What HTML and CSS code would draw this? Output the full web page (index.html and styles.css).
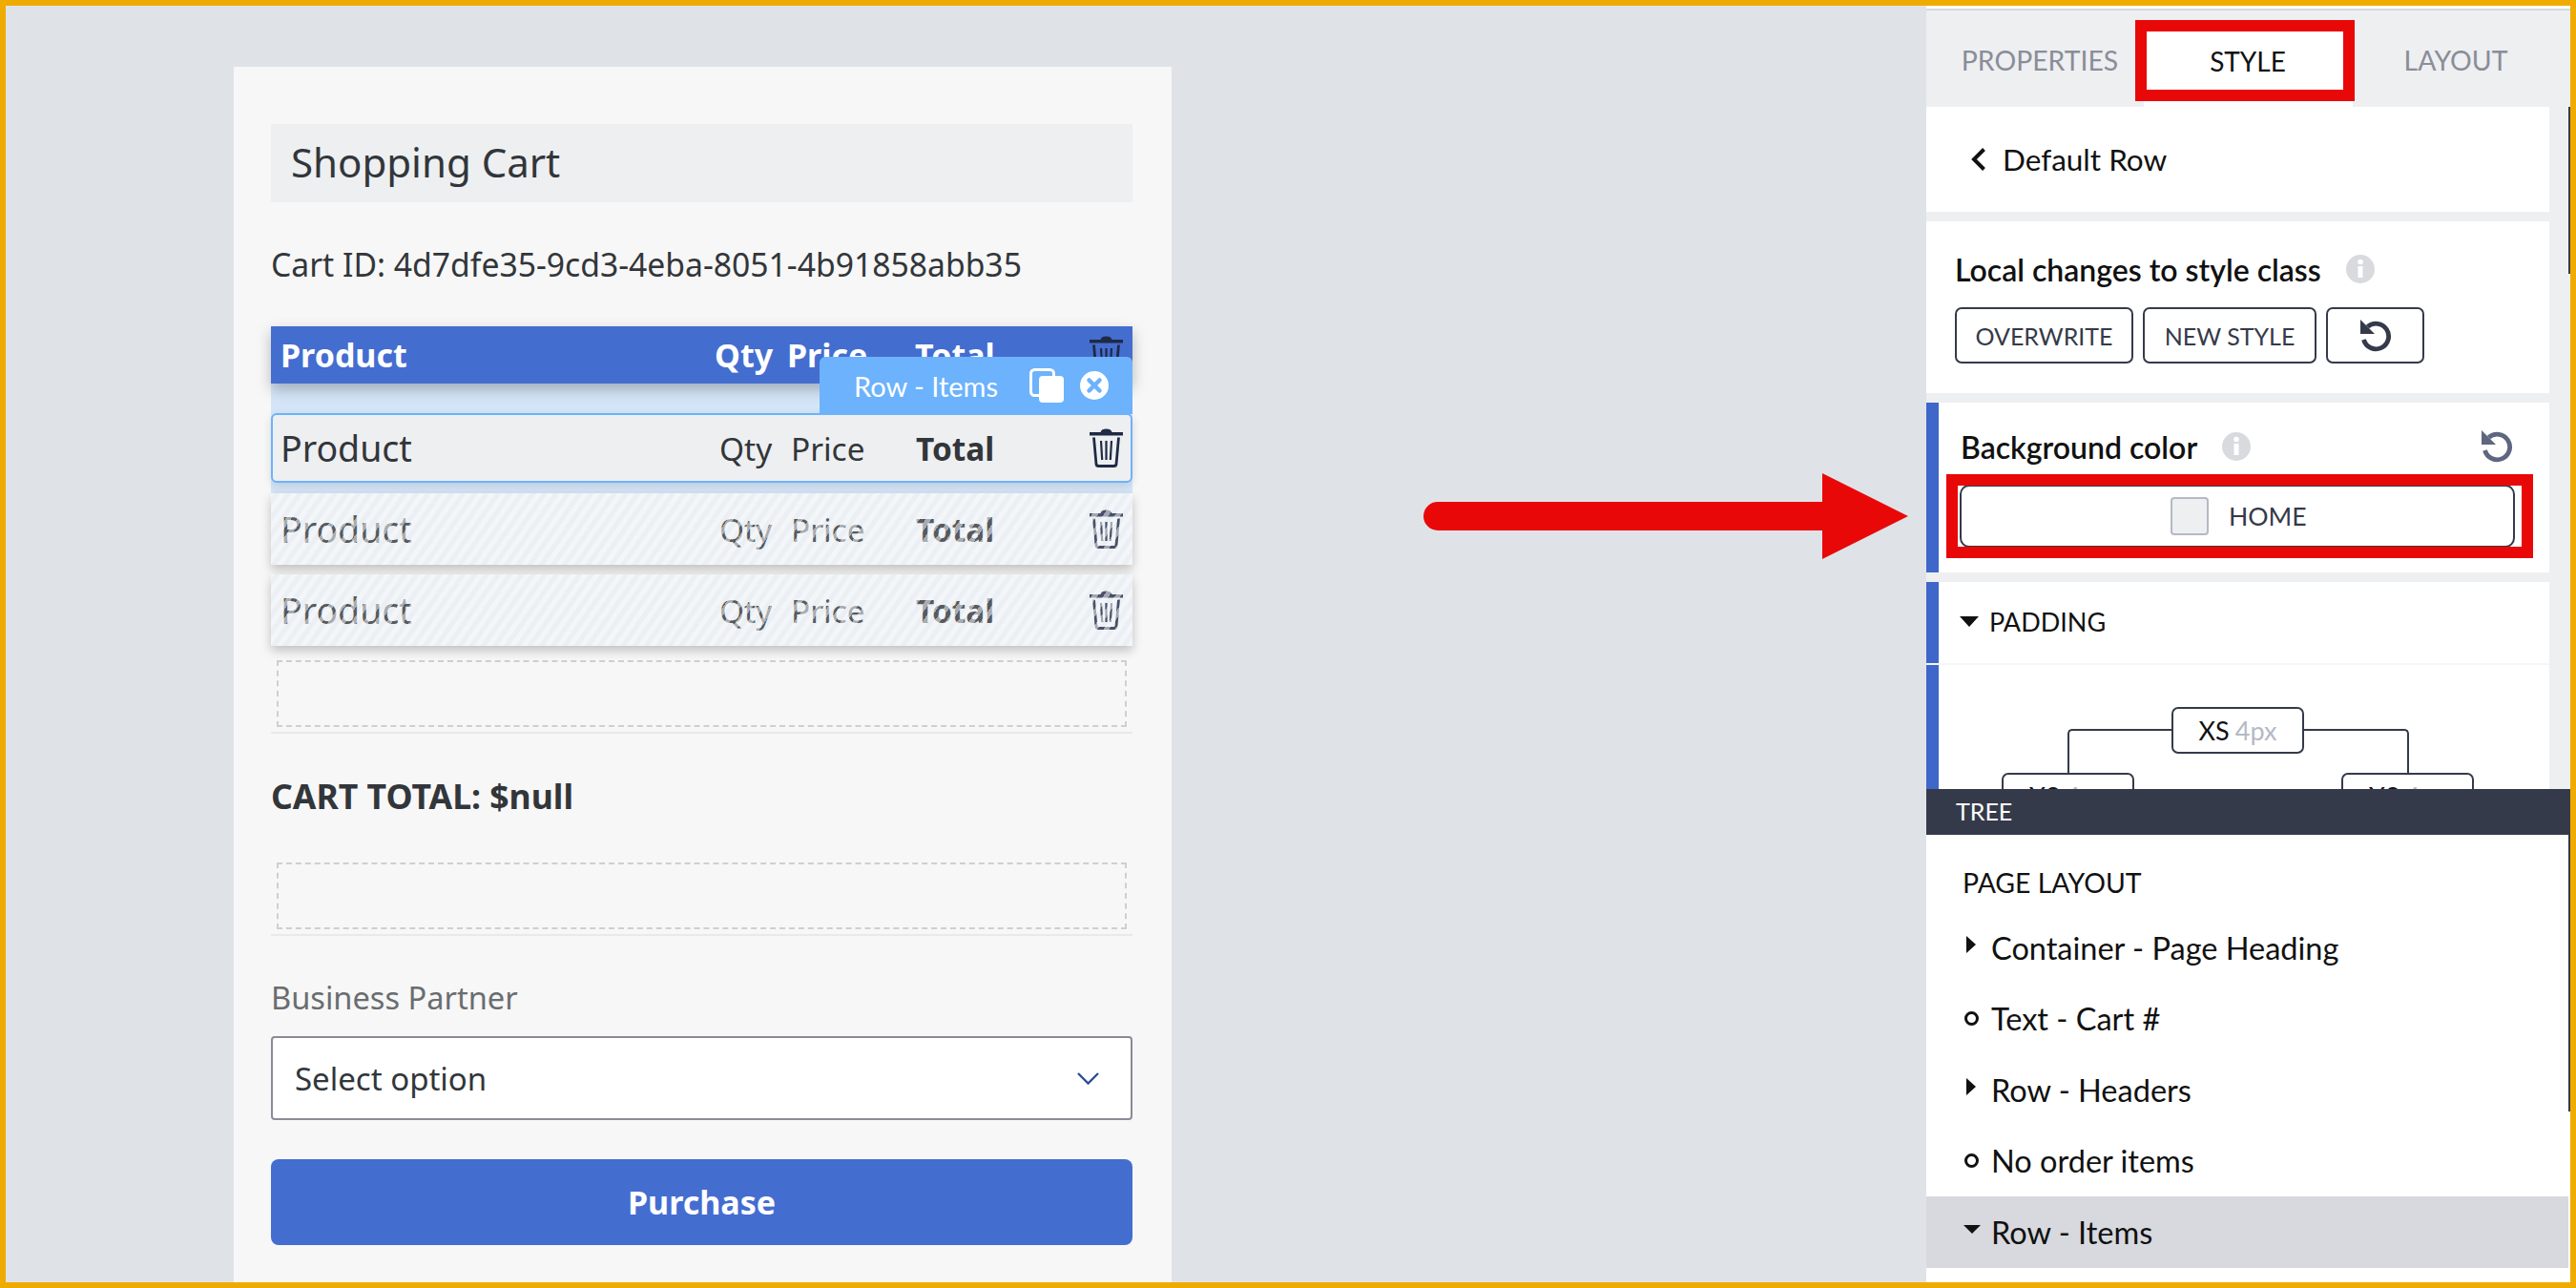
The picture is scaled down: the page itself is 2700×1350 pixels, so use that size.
FILE: index.html
```html
<!DOCTYPE html>
<html lang="en">
<head>
<meta charset="utf-8">
<title>Shopping Cart designer</title>
<link rel="stylesheet" href="styles.css">
</head>
<body>
<svg class="defs" width="0" height="0" aria-hidden="true">
  <symbol id="trash" viewBox="0 0 35 41">
    <path d="M11.5 4C12 1.5 14.5.5 17.5.5S23 1.500 23.500 4z" fill="currentColor"/>
    <rect x="0" y="4" width="35" height="3.500" fill="currentColor"/>
    <path d="M4.500 9.500 7 37.500Q7.300 39.500 9.500 39.500H25.500Q27.700 39.500 28 37.500L30.500 9.500" fill="none" stroke="currentColor" stroke-width="2.800"/>
    <path d="M12 13 13.200 33M17.500 13V33M23 13 21.800 33" fill="none" stroke="currentColor" stroke-width="2.200"/>
  </symbol>
  <symbol id="reset" viewBox="0 0 34 34">
    <path d="M8.500 7.500A13.300 13.300 0 1 1 4.500 21" fill="none" stroke="currentColor" stroke-width="4.800"/>
    <path d="M1 0 1 15 16 15z" fill="currentColor"/>
  </symbol>
  <symbol id="info" viewBox="0 0 30 30">
    <circle cx="15" cy="15" r="15" fill="#d8dade"/>
    <rect x="12.500" y="12" width="5" height="12" fill="#fff"/>
    <circle cx="15" cy="7.500" r="2.800" fill="#fff"/>
  </symbol>
</svg>
<div class="page">
  <main class="canvas">
    <section class="card">
      <h1 class="title">Shopping Cart</h1>
      <p class="cart-id">Cart ID: 4d7dfe35-9cd3-4eba-8051-4b91858abb35</p>

      <div class="row row-head">
        <span>Product</span><span>Qty</span><span>Price</span><span>Total</span>
        <svg class="trash"><use href="#trash"/></svg>
      </div>

      <div class="items">
        <div class="toolbar">
          <span class="toolbar-label">Row - Items</span>
          <svg class="copy-icon" viewBox="0 0 36 36">
            <rect x="1.500" y="1.500" width="24" height="27" rx="4" fill="none" stroke="#fff" stroke-width="3"/>
            <rect x="10" y="8" width="26" height="28" rx="4" fill="#fff"/>
          </svg>
          <svg class="close-icon" viewBox="0 0 30 30">
            <circle cx="15" cy="15" r="15" fill="#fff"/>
            <path d="M9.500 9.500 20.500 20.500M20.500 9.500 9.500 20.500" stroke="#6cb2fc" stroke-width="4.500" stroke-linecap="round"/>
          </svg>
        </div>
        <div class="row row-item row-selected">
          <span class="product">Product</span><span>Qty</span><span>Price</span><strong>Total</strong>
          <svg class="trash"><use href="#trash"/></svg>
        </div>
      </div>
      <div class="row row-item row-ghost">
        <span class="product">Product</span><span>Qty</span><span>Price</span><strong>Total</strong>
        <svg class="trash"><use href="#trash"/></svg>
      </div>
      <div class="row row-item row-ghost">
        <span class="product">Product</span><span>Qty</span><span>Price</span><strong>Total</strong>
        <svg class="trash"><use href="#trash"/></svg>
      </div>

      <div class="dropzone dropzone-first"><div class="dashed"></div></div>
      <p class="cart-total">CART TOTAL: $null</p>
      <div class="dropzone dropzone-second"><div class="dashed"></div></div>

      <p class="field-label">Business Partner</p>
      <div class="select">
        <span>Select option</span>
        <svg class="select-chevron" viewBox="0 0 23 13"><path d="M1 1 11.500 11.500 22 1" fill="none" stroke="#2a4d9c" stroke-width="2.400"/></svg>
      </div>
      <button class="purchase" type="button">Purchase</button>
    </section>
  </main>

  <svg class="arrow" viewBox="0 0 508 90">
    <path d="M15 30H418V0L508 45 418 90V60H15A15 15 0 0 1 15 30z" fill="#e90808"/>
  </svg>

  <aside class="panel">
    <nav class="tabs">
      <div class="tab tab-left">PROPERTIES</div>
      <div class="tab-active-wrap"><div class="tab-active">STYLE</div></div>
      <div class="tab tab-right">LAYOUT</div>
    </nav>
    <div class="sections">
      <div class="scrollbar scrollbar-top"></div>
      <div class="sec sec-back">
        <svg class="back-chevron" viewBox="0 0 15 24"><path d="M13.500 1.500 3 12 13.500 22.500" fill="none" stroke="#111" stroke-width="4"/></svg>
        <span>Default Row</span>
      </div>
      <div class="sec sec-local">
        <div class="sec-title-row">
          <span class="sec-title">Local changes to style class</span>
          <svg class="info"><use href="#info"/></svg>
        </div>
        <div class="btn-row">
          <button class="btn btn-overwrite" type="button">OVERWRITE</button>
          <button class="btn btn-new" type="button">NEW STYLE</button>
          <button class="btn btn-reset" type="button"><svg class="reset-dark"><use href="#reset"/></svg></button>
        </div>
      </div>
      <div class="sec sec-bg">
        <div class="sec-title-row">
          <span class="sec-title">Background color</span>
          <svg class="info"><use href="#info"/></svg>
          <svg class="reset-muted"><use href="#reset"/></svg>
        </div>
        <div class="highlight">
          <div class="color-btn"><span class="swatch"></span><span>HOME</span></div>
        </div>
      </div>
      <div class="sec sec-padding-head">
        <span class="tri-down-lg"></span><span>PADDING</span>
      </div>
      <div class="sec sec-diagram">
        <div class="diagram">
          <div class="wire wire-left"></div>
          <div class="wire wire-right"></div>
          <div class="pad-box pad-top">XS <em>4px</em></div>
          <div class="pad-box pad-left">XS <em>4px</em></div>
          <div class="pad-box pad-right">XS <em>4px</em></div>
        </div>
      </div>
    </div>
    <div class="tree">
      <div class="tree-bar">TREE</div>
      <div class="tree-body">
        <div class="scrollbar scrollbar-tree"></div>
        <div class="tree-heading">PAGE LAYOUT</div>
        <div class="tree-row"><span class="mark"><i class="tri-right"></i></span>Container - Page Heading</div>
        <div class="tree-row"><span class="mark"><i class="dot"></i></span>Text - Cart #</div>
        <div class="tree-row"><span class="mark"><i class="tri-right"></i></span>Row - Headers</div>
        <div class="tree-row"><span class="mark"><i class="dot"></i></span>No order items</div>
        <div class="tree-row tree-row-selected"><span class="mark"><i class="tri-down"></i></span>Row - Items</div>
      </div>
    </div>
  </aside>
</div>
</body>
</html>
```

FILE: styles.css
```css
* { box-sizing: border-box; }
html, body { margin: 0; padding: 0; }
body { font-family: "Noto Sans", sans-serif; color: #32363a; }
.defs { position: absolute; }
p, h1 { margin: 0; font-weight: 400; }

.page {
  position: relative;
  width: 2700px;
  height: 1350px;
  border: 6px solid #f0ab00;
  background: #dfe3e8;
  display: flex;
  overflow: hidden;
}

/* canvas */
.canvas { width: 2013px; padding: 64px 0 0 239px; display: flex; }
.card {
  width: 983px;
  background: #f7f7f7;
  padding: 60px 41px 0 39px;
}
.title {
  height: 82px;
  background: #eeeff1;
  padding-left: 21px;
  font-size: 42px;
  line-height: 80px;
}
.cart-id { margin-top: 45px; font-size: 33.7px; line-height: 40px; }

.row { display: grid; align-items: center; }
.row-head {
  position: relative;
  z-index: 1;
  margin-top: 45px;
  height: 60px;
  padding-left: 10px;
  grid-template-columns: 455px 76px 134px 183px 35px;
  background: #446dd0;
  color: #fff;
  font-size: 34px;
  font-weight: 700;
  box-shadow: 0 6px 14px rgba(0, 0, 0, .25);
}
.row-head span { line-height: 60px; }
.trash { width: 35px; height: 41px; color: #1f2a44; }

.items {
  position: relative;
  background: #d4e5f7;
  padding: 31px 0 11px;
}
.row-item {
  height: 75px;
  padding-left: 10px;
  grid-template-columns: 460px 75px 131px 182px 35px;
  font-size: 33.4px;
  line-height: 40px;
}
.row-item .product { font-size: 37.5px; }
.row-item strong { font-weight: 700; }
.row-selected {
  position: relative;
  height: 73px;
  padding-left: 8px;
  background: #eeeff1;
  border: 2px solid #6cb2fc;
  border-radius: 6px;
  box-shadow: 0 3px 10px rgba(0, 0, 0, .12);
}
.row-ghost {
  position: relative;
  background: #ecf0f4;
  box-shadow: 0 5px 10px rgba(0, 0, 0, .22);
  margin-bottom: 10px;
}
.row-ghost::after {
  content: "";
  position: absolute;
  inset: 0;
  background: repeating-linear-gradient(-55deg, rgba(248, 250, 252, .6) 0 5px, rgba(233, 238, 243, .2) 5px 10px);
}
.toolbar {
  position: absolute;
  z-index: 2;
  right: 0;
  top: -28px;
  width: 328px;
  height: 60px;
  background: #6cb2fc;
  border-radius: 6px 6px 0 0;
  display: flex;
  align-items: center;
  padding-left: 36px;
  color: #fff;
}
.toolbar-label { font-family: Lato, sans-serif; font-size: 29px; width: 184px; }
.copy-icon { width: 36px; height: 36px; margin-right: 17px; }
.close-icon { width: 30px; height: 30px; }

.dropzone { padding: 0 6px 5px; border-bottom: 2px solid #e8e9eb; }
.dropzone-first { margin-top: 15px; }
.dropzone-second { margin-top: 50px; }
.dashed { height: 70px; border: 2px dashed #cfcfcf; }
.cart-total { margin-top: 45px; font-size: 35.6px; line-height: 40px; font-weight: 700; }
.field-label { margin-top: 47px; font-size: 32.6px; line-height: 36px; color: #6a6d70; }
.select {
  margin-top: 22px;
  height: 88px;
  background: #fff;
  border: 2px solid #8a8b98;
  border-radius: 4px;
  padding: 0 33px 0 23px;
  display: flex;
  align-items: center;
  justify-content: space-between;
  font-size: 33px;
}
.select-chevron { width: 23px; height: 13px; }
.purchase {
  display: block;
  width: 100%;
  margin-top: 41px;
  height: 90px;
  border: 0;
  border-radius: 8px;
  background: #446dd0;
  color: #fff;
  font: 700 34px "Noto Sans", sans-serif;
}

/* annotation arrow */
.arrow {
  position: absolute;
  left: 1486px;
  top: 490px;
  width: 508px;
  height: 90px;
}

/* right panel */
.panel {
  width: 675px;
  height: 1338px;
  background: #fff;
  display: flex;
  flex-direction: column;
  font-family: Lato, sans-serif;
  color: #111;
}
.tabs {
  margin-top: 3px;
  height: 103px;
  border-top: 2px solid #d7d9de;
  background: #eeeff1;
  display: grid;
  grid-template-columns: 219px 230px 226px;
  flex: none;
}
.tab {
  display: flex;
  align-items: center;
  justify-content: center;
  padding-top: 3px;
  color: #8a8d99;
  font-size: 28.4px;
}
.tab-left { padding-left: 19px; }
.tab-right { padding-right: 14px; }
.tab-active-wrap { position: relative; padding-top: 10px; }
.tab-active-wrap::after {
  content: "";
  position: absolute;
  left: 9px;
  right: 2px;
  bottom: 0;
  height: 6px;
  background: #fff;
}
.tab-active {
  height: 85px;
  border: 12px solid #e90808;
  background: #fff;
  display: flex;
  align-items: center;
  justify-content: center;
  padding-left: 6px;
  font-size: 28px;
}

.sections {
  position: relative;
  height: 715px;
  flex: none;
  background: #eeeff1;
  overflow: hidden;
  padding-right: 22px;
}
.scrollbar { position: absolute; right: 0; width: 2px; background: #353a4a; }
.scrollbar-top { top: 0; height: 175px; }
.scrollbar-tree { top: 0; height: 290px; }
.sec { background: #fff; margin-bottom: 10px; }
.sec-back {
  height: 110px;
  display: flex;
  align-items: center;
  padding-left: 47px;
  font-size: 31.5px;
}
.back-chevron { width: 15px; height: 24px; margin-right: 18px; }
.sec-local { height: 180px; padding: 32px 0 0 30px; }
.sec-title-row { display: flex; align-items: center; height: 36px; }
.sec-title { font-size: 32px; font-weight: 600; }
.info { width: 30px; height: 30px; margin-left: 26px; }
.btn-row { display: flex; gap: 10px; margin-top: 22px; }
.btn {
  height: 59px;
  background: #fff;
  border: 2px solid #353a4a;
  border-radius: 7px;
  color: #353a4a;
  font: 400 25px Lato, sans-serif;
  display: flex;
  align-items: center;
  justify-content: center;
  padding: 0;
}
.btn-overwrite { width: 187px; }
.btn-new { width: 182px; }
.btn-reset { width: 103px; }
.reset-dark { width: 34px; height: 34px; color: #353a4a; }
.reset-muted { width: 34px; height: 34px; color: #5f6680; margin-left: auto; margin-right: 38px; }

.sec-bg {
  height: 178px;
  border-left: 13px solid #3f66c9;
  padding: 28px 0 0 23px;
}
.highlight {
  margin: 11px 0 0 -15px;
  width: 615px;
  height: 88px;
  border: 12px solid #e90808;
  background: #fff;
  padding-left: 2px;
  overflow: hidden;
}
.color-btn {
  width: 582px;
  height: 66px;
  margin-top: -1px;
  border: 2px solid #353a4a;
  border-radius: 10px;
  display: flex;
  align-items: center;
  padding-left: 219px;
  color: #353a4a;
  font-size: 26.6px;
}
.swatch {
  width: 40px;
  height: 40px;
  background: #eeeff1;
  border: 2px solid #b5b9c5;
  border-radius: 4px;
  margin-right: 21px;
}
.sec-padding-head {
  height: 85px;
  margin-bottom: 0;
  border-left: 13px solid #3f66c9;
  display: flex;
  align-items: center;
  padding: 0 0 2px 22px;
  font-size: 27px;
}
.tri-down-lg {
  width: 0;
  height: 0;
  border-left: 10px solid transparent;
  border-right: 10px solid transparent;
  border-top: 11px solid #111;
  margin-right: 11px;
}
.sec-diagram {
  height: 200px;
  margin-top: 2px;
  margin-bottom: 0;
  border-left: 13px solid #3f66c9;
  box-shadow: 0 -2px 0 #f5f6f7;
}
.diagram { position: relative; height: 100%; }
.pad-box {
  position: absolute;
  width: 139px;
  height: 49px;
  border: 2px solid #353a4a;
  border-radius: 7px;
  background: #fff;
  display: flex;
  align-items: center;
  justify-content: center;
  gap: 6px;
  font-size: 27px;
}
.pad-box em { font-style: normal; color: #b5b9c5; }
.pad-top { left: 244px; top: 44px; }
.pad-left { left: 66px; top: 113px; }
.pad-right { left: 422px; top: 113px; }
.wire {
  position: absolute;
  top: 67px;
  height: 47px;
  width: 111px;
  border-top: 2px solid #353a4a;
}
.wire-left { left: 135px; border-left: 2px solid #353a4a; border-top-left-radius: 5px; }
.wire-right { left: 382px; border-right: 2px solid #353a4a; border-top-right-radius: 5px; }

.tree { flex: 1; display: flex; flex-direction: column; position: relative; z-index: 1; }
.tree-bar {
  height: 48px;
  flex: none;
  background: #353a4a;
  color: #fff;
  font-size: 25px;
  line-height: 46px;
  padding-left: 31px;
}
.tree-body { position: relative; flex: 1; padding: 30px 2px 0 0; background: #fff; }
.tree-heading { padding-left: 38px; font-size: 28.4px; line-height: 40px; margin-bottom: 11px; }
.tree-row {
  height: 74.5px;
  display: flex;
  align-items: center;
  font-size: 32.5px;
}
.tree-row-selected { background: #d7d9de; }
.mark {
  width: 68px;
  padding-left: 39px;
  flex: none;
  display: flex;
  align-items: center;
}
.tri-right {
  margin: -6px 0 0 3px;
  border-top: 9px solid transparent;
  border-bottom: 9px solid transparent;
  border-left: 10px solid #111;
}
.dot {
  margin-left: 1px;
  width: 15px;
  height: 15px;
  border: 3px solid #111;
  border-radius: 50%;
}
.tri-down {
  margin-top: -6px;
  border-left: 9px solid transparent;
  border-right: 9px solid transparent;
  border-top: 9px solid #111;
}
```
